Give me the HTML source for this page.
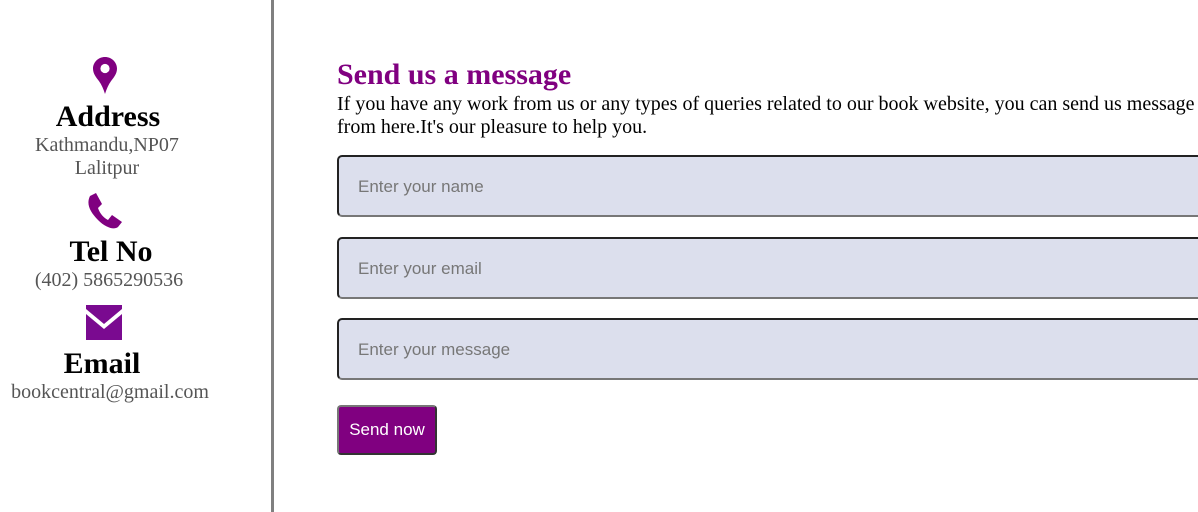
<!DOCTYPE html>
<html><head><meta charset="utf-8"><style>
body{margin:0;width:1198px;height:512px;overflow:hidden;background:#fff;position:relative;font-family:"Liberation Serif",serif;}
.a{position:absolute;white-space:nowrap;}
.c{width:300px;text-align:center;}
.h{font-size:30px;font-weight:bold;line-height:34px;color:#000;}
.t{font-size:20px;line-height:23px;color:#555;}
.line{position:absolute;left:271px;top:0;width:3px;height:512px;background:#808080;}
.inp{position:absolute;left:337px;width:880px;height:62px;box-sizing:border-box;background:#dcdfed;border:2px solid;border-color:#222 #777 #777 #222;border-radius:5px;font-family:"Liberation Sans",sans-serif;font-size:17px;color:#777;padding-left:19px;line-height:59px;}
.btn{position:absolute;left:337px;top:405px;width:100px;height:50px;box-sizing:border-box;background:#800080;border:2px solid;border-color:#777 #333 #333 #777;border-radius:4px;color:#fff;font-family:"Liberation Sans",sans-serif;font-size:17px;text-align:center;line-height:46px;}
</style></head><body>
<svg class="a" style="left:93px;top:57px" width="24" height="37" viewBox="0 0 24 37"><path d="M12 0C5.4 0 0 5.2 0 11.6c0 5 3 8.5 6 12.5 2.5 3.5 4.5 8 6 12.9 1.5-4.9 3.5-9.4 6-12.9 3-4 6-7.5 6-12.5C24 5.2 18.6 0 12 0z" fill="#800080"/><circle cx="12" cy="11.5" r="4.6" fill="#fff"/></svg>
<div class="a c h" style="left:-42px;top:100px">Address</div>
<div class="a c t" style="left:-43px;top:134px">Kathmandu,NP07<br>Lalitpur</div>
<svg class="a" style="left:86px;top:193px" width="36" height="36" viewBox="0 0 36 36"><path d="M4 3 L10 0 L16 11 L12 15 C14 21 18 25 22 27 L26 22 L36 29 L32 34 C28 37 20 35 12 27 C4 19 0 11 4 3Z" fill="#800080"/></svg>
<div class="a c h" style="left:-39px;top:235px">Tel No</div>
<div class="a c t" style="left:-41px;top:269px">(402) 5865290536</div>
<svg class="a" style="left:86px;top:305px" width="36" height="35" viewBox="0 0 36 35"><rect x="0" y="0" width="36" height="35" fill="#7a0a90"/><path d="M0 4 L18 19 L36 4 L36 9 L18 24 L0 9Z" fill="#fff"/></svg>
<div class="a c h" style="left:-48px;top:347px">Email</div>
<div class="a c t" style="left:-40px;top:381px">bookcentral@gmail.com</div>
<div class="line"></div>
<div class="a" style="left:337px;top:58px;font-size:30px;font-weight:bold;line-height:34px;color:#800080">Send us a message</div>
<div class="a" style="left:337px;top:93px;font-size:20px;line-height:23px;color:#000">If you have any work from us or any types of queries related to our book website, you can send us message<br>from here.It's our pleasure to help you.</div>
<div class="inp" style="top:155px">Enter your name</div>
<div class="inp" style="top:237px">Enter your email</div>
<div class="inp" style="top:318px">Enter your message</div>
<div class="btn">Send now</div>
</body></html>
